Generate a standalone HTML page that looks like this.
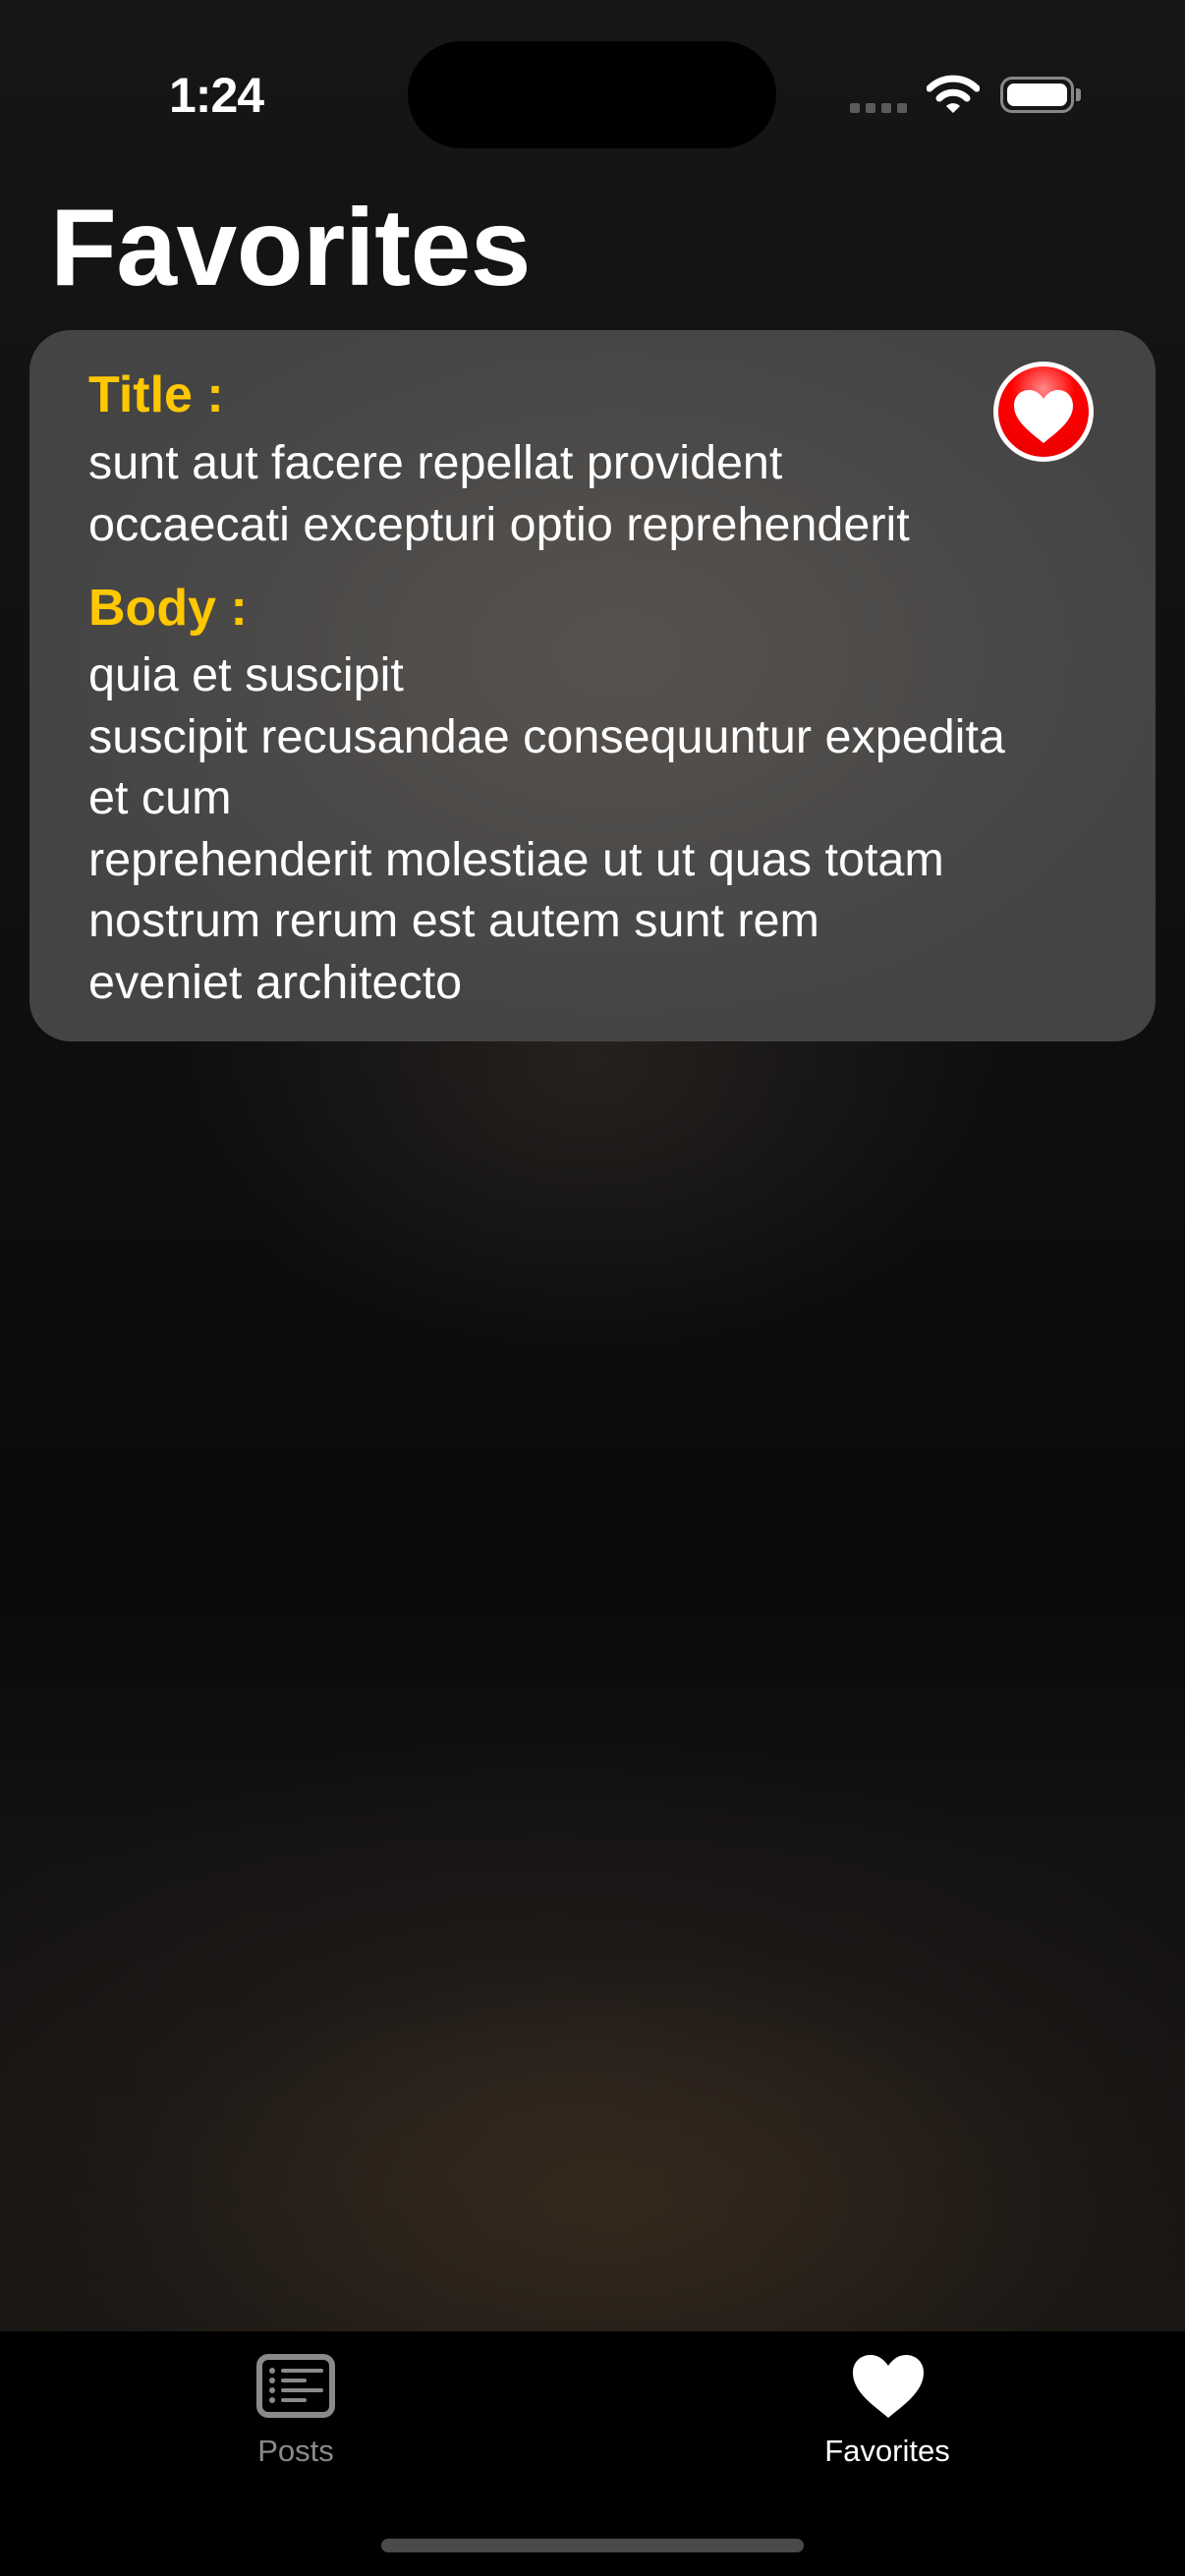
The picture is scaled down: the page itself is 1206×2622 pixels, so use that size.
<!DOCTYPE html>
<html><head><meta charset="utf-8"><style>
*{margin:0;padding:0;box-sizing:border-box}
html,body{width:1206px;height:2622px;overflow:hidden}
body{position:relative;font-family:"Liberation Sans",sans-serif;color:#fff;
background:
radial-gradient(ellipse 520px 260px at 620px 2240px,rgba(70,50,30,.55),rgba(0,0,0,0) 100%),
radial-gradient(ellipse 700px 380px at 560px 2150px,rgba(45,38,34,.6),rgba(0,0,0,0) 100%),
radial-gradient(ellipse 420px 300px at 600px 1080px,rgba(60,52,46,.5),rgba(0,0,0,0) 100%),
linear-gradient(#161616 0px,#121212 500px,#0d0d0e 1300px,#0a0a0b 1600px,#141212 1900px,#1a1714 2370px);}
.abs{position:absolute}
.time{left:172px;top:68px;font-size:50px;font-weight:bold;letter-spacing:-1px}
.island{left:415px;top:42px;width:375px;height:109px;border-radius:55px;background:#000}
.dot{top:105px;width:10px;height:10px;border-radius:2px;background:#5a5a5a}
h1{position:absolute;left:51px;top:186px;font-size:111px;font-weight:bold;letter-spacing:-0.5px;line-height:1.2}
.card{left:30px;top:336px;width:1146px;height:724px;border-radius:42px;
background:radial-gradient(ellipse 600px 400px at 600px 330px,#57524e,#494847 70%,#444 100%)}
.lbl{color:#FFC800;font-weight:bold;font-size:52px}
.t{font-size:48.5px;line-height:62.5px;color:#fff}
.tab{top:2373px;left:0;width:1206px;height:249px;background:#000}
</style></head><body>
<div class="abs time">1:24</div>
<div class="abs island"></div>
<div class="abs dot" style="left:865px"></div>
<div class="abs dot" style="left:881px"></div>
<div class="abs dot" style="left:897px"></div>
<div class="abs dot" style="left:913px"></div>
<svg class="abs" style="left:943px;top:76px" width="54" height="40" viewBox="0 0 54 40">
<path d="M3 14 A34 34 0 0 1 51 14" stroke="#fff" stroke-width="7" fill="none" stroke-linecap="round"/>
<path d="M13 24 A20 20 0 0 1 41 24" stroke="#fff" stroke-width="7" fill="none" stroke-linecap="round"/>
<path d="M20 32 L27 39 L34 32 A10 10 0 0 0 20 32Z" fill="#fff"/></svg>
<div class="abs" style="left:1018px;top:78px;width:75px;height:37px;border:3px solid #888;border-radius:12px;padding:4px"><div style="width:100%;height:100%;background:#fff;border-radius:7px"></div></div>
<div class="abs" style="left:1095px;top:90px;width:5px;height:13px;background:#888;border-radius:0 3px 3px 0"></div>
<h1>Favorites</h1>
<div class="abs card"></div>
<div class="abs lbl" style="left:90px;top:372px">Title :</div>
<div class="abs t" style="left:90px;top:440px">sunt aut facere repellat provident<br>occaecati excepturi optio reprehenderit</div>
<div class="abs lbl" style="left:90px;top:589px">Body :</div>
<div class="abs t" style="left:90px;top:656px">quia et suscipit<br>suscipit recusandae consequuntur expedita<br>et cum<br>reprehenderit molestiae ut ut quas totam<br>nostrum rerum est autem sunt rem<br>eveniet architecto</div>
<svg class="abs" style="left:1008px;top:365px" width="108" height="108" viewBox="0 0 108 108">
<defs><radialGradient id="g" cx="50%" cy="25%" r="70%"><stop offset="0" stop-color="#ff8a8a"/><stop offset=".5" stop-color="#f00"/><stop offset="1" stop-color="#e00"/></radialGradient></defs>
<circle cx="54" cy="54" r="51" fill="#fff"/><circle cx="54" cy="54" r="46" fill="url(#g)"/>
<path d="M54 86 C42 76 24 64 24 48 C24 38 31 32 39 32 C46 32 51 36 54 41 C57 36 62 32 69 32 C77 32 84 38 84 48 C84 64 66 76 54 86Z" fill="#fff"/></svg>
<div class="abs tab"></div>
<svg class="abs" style="left:260px;top:2395px" width="82" height="67" viewBox="0 0 82 67">
<rect x="4" y="4" width="74" height="59" rx="9" fill="none" stroke="#8a8a8a" stroke-width="6"/>
<g fill="#8a8a8a"><circle cx="17" cy="18" r="3"/><circle cx="17" cy="28" r="3"/><circle cx="17" cy="38" r="3"/><circle cx="17" cy="48" r="3"/>
<rect x="26" y="16" width="43" height="4" rx="2"/><rect x="26" y="26" width="26" height="4" rx="2"/><rect x="26" y="36" width="43" height="4" rx="2"/><rect x="26" y="46" width="26" height="4" rx="2"/></g></svg>
<div class="abs" style="left:221px;width:160px;top:2477px;text-align:center;font-size:31px;color:#8a8a8a">Posts</div>
<svg class="abs" style="left:868px;top:2397px" width="72" height="64" viewBox="0 0 72 64">
<path d="M36 64 C22 52 0 38 0 18 C0 7 8 0 18 0 C26 0 32 5 36 11 C40 5 46 0 54 0 C64 0 72 7 72 18 C72 38 50 52 36 64Z" fill="#fff"/></svg>
<div class="abs" style="left:803px;width:200px;top:2477px;text-align:center;font-size:31px;color:#fff">Favorites</div>
<div class="abs" style="left:388px;top:2584px;width:430px;height:14px;border-radius:7px;background:#4a4a4a"></div>
</body></html>
